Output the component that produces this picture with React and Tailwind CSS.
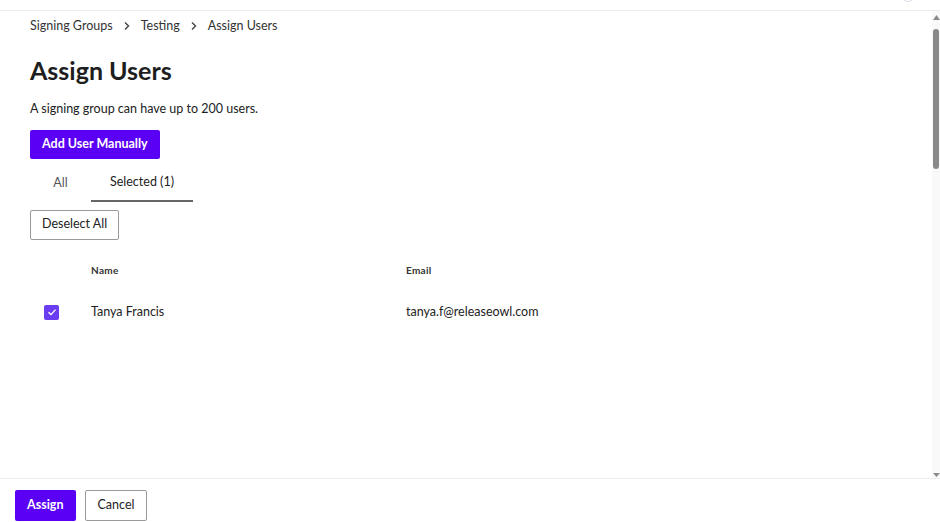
import React, { useState } from 'react';

const users = [{ id: 1, name: 'Tanya Francis', email: 'tanya.f@releaseowl.com', selected: true }];

const Breadcrumb = () => (
  <div className="flex items-center text-[12.5px] text-[#333]">
    <span>Signing Groups</span>
    <svg className="mx-[9px] w-[10px] h-[10px]" viewBox="0 0 10 10" fill="none" stroke="#444" strokeWidth="1.4">
      <path d="M3 1.5 L6.5 5 L3 8.5" />
    </svg>
    <span>Testing</span>
    <svg className="mx-[9px] w-[10px] h-[10px]" viewBox="0 0 10 10" fill="none" stroke="#444" strokeWidth="1.4">
      <path d="M3 1.5 L6.5 5 L3 8.5" />
    </svg>
    <span>Assign Users</span>
  </div>
);

const Scrollbar = () => (
  <div className="w-[8px] flex flex-col items-center bg-[#f9f9f9]">
    <svg className="mt-[4px] w-[7px] h-[5px]" viewBox="0 0 7 5">
      <path d="M0 5 L3.5 0 L7 5 Z" fill="#8a8a8a" />
    </svg>
    <div className="mt-[9px] w-[6px] h-[140px] rounded-full bg-[#8a8a8a]" />
    <div className="flex-1" />
    <svg className="mb-[1px] w-[7px] h-[4px]" viewBox="0 0 7 4">
      <path d="M0 0 L7 0 L3.5 4 Z" fill="#8a8a8a" />
    </svg>
  </div>
);

export default function App() {
  const [tab, setTab] = useState('selected');
  const [rows, setRows] = useState(users);

  const toggle = (id) => setRows(prev => prev.map(r => (r.id === id ? { ...r, selected: !r.selected } : r)));

  return (
    <div className="w-[940px] h-[522px] bg-white flex flex-col overflow-hidden" style={{ fontFamily: 'Lato, "Noto Sans", sans-serif' }}>
      {/* top strip */}
      <div className="h-[11px] border-b border-[#ececec] relative shrink-0">
        <div className="absolute right-[24px] -top-[14px] w-[16px] h-[16px] rounded-full border border-[#d8dde3]" />
      </div>

      <div className="flex-1 flex min-h-0">
        <div className="flex-1 px-[30px]">
          <div className="pt-[6px]">
            <Breadcrumb />
          </div>
          <h1 className="mt-[19px] text-[25px] leading-[30px] font-bold text-[#1e1e1e]">Assign Users</h1>
          <p className="mt-[15px] text-[12.5px] text-[#222]">A signing group can have up to 200 users.</p>

          <button className="mt-[11px] h-[29px] px-[12px] bg-[#5a00f5] text-white text-[12.5px] font-bold rounded-[2px]">
            Add User Manually
          </button>

          <div className="flex mt-[6px]">
            <button
              onClick={() => setTab('all')}
              className={`w-[61px] h-[37px] text-[12.5px] ${tab === 'all' ? 'text-[#222] border-b-2 border-[#666]' : 'text-[#555]'}`}
            >
              All
            </button>
            <button
              onClick={() => setTab('selected')}
              className={`w-[102px] h-[37px] text-[12.5px] ${tab === 'selected' ? 'text-[#222] border-b-2 border-[#666]' : 'text-[#555]'}`}
            >
              Selected (1)
            </button>
          </div>

          <button className="mt-[8px] h-[30px] px-[11px] border border-[#9a9a9a] rounded-[2px] text-[12.5px] text-[#222] bg-white">
            Deselect All
          </button>

          <div className="mt-[24px]">
            <div className="flex h-[14px] items-center text-[10px] font-bold text-[#333] tracking-[0.3px]">
              <div className="w-[61px]" />
              <div className="w-[315px]">Name</div>
              <div>Email</div>
            </div>
            {rows.map(r => (
              <div key={r.id} className="flex items-center h-[56px] text-[12.5px] text-[#222] pt-[13px]">
                <div className="w-[61px] flex pl-[14px]">
                  <button
                    onClick={() => toggle(r.id)}
                    className={`w-[15px] h-[15px] rounded-[2px] flex items-center justify-center ${r.selected ? 'bg-[#6a3cf2]' : 'border border-[#888]'}`}
                  >
                    {r.selected && (
                      <svg className="w-[10px] h-[10px]" viewBox="0 0 10 10" fill="none" stroke="white" strokeWidth="1.4">
                        <path d="M1.5 5.3 L4 7.6 L8.5 2.6" />
                      </svg>
                    )}
                  </button>
                </div>
                <div className="w-[315px]">{r.name}</div>
                <div>{r.email}</div>
              </div>
            ))}
          </div>
        </div>
        <Scrollbar />
      </div>

      {/* footer */}
      <div className="h-[44px] shrink-0 border-t border-[#ececec] flex items-start gap-[9px] px-[15px] pt-[11px]">
        <button className="h-[31px] px-[12px] bg-[#5a00f5] text-white text-[12.5px] font-bold rounded-[2px]">Assign</button>
        <button className="h-[31px] px-[12px] border border-[#9a9a9a] rounded-[2px] text-[12.5px] text-[#222] bg-white">Cancel</button>
      </div>
    </div>
  );
}
